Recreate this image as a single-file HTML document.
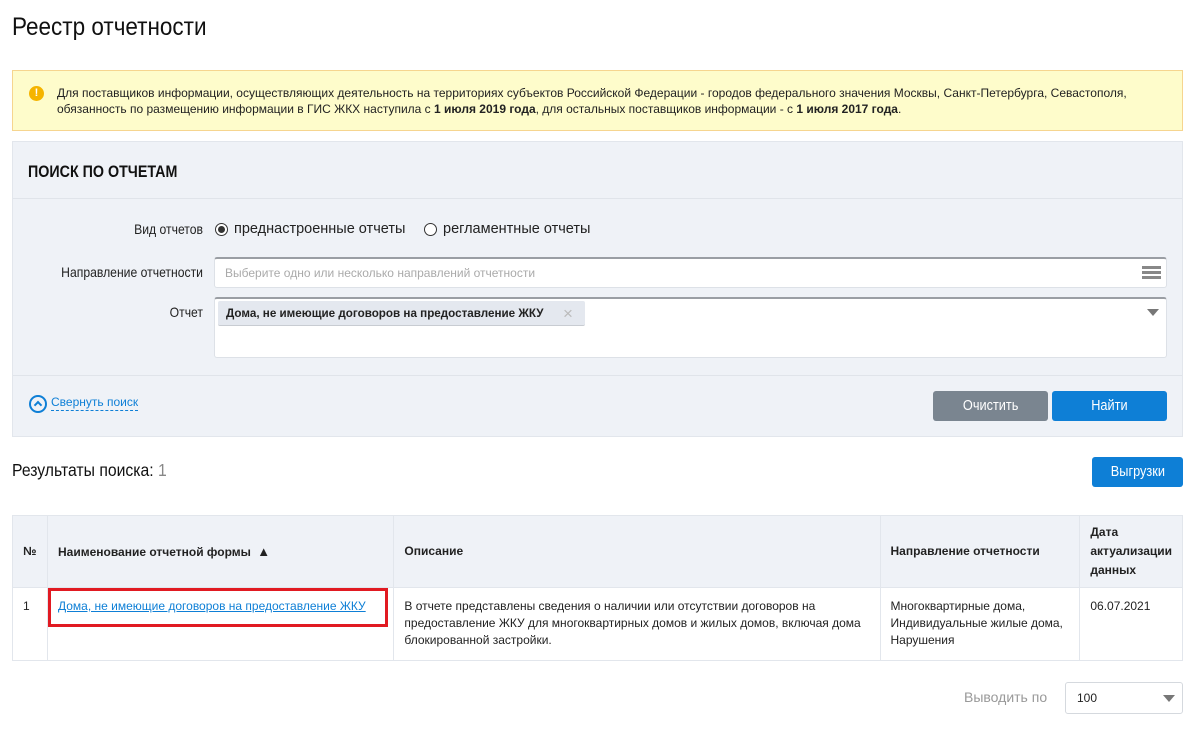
<!DOCTYPE html>
<html><head><meta charset="utf-8"><style>
*{box-sizing:border-box;margin:0;padding:0}
body{width:1190px;height:731px;background:#fff;font-family:"Liberation Sans",sans-serif;color:#222;position:relative;overflow:hidden}
.n{transform-origin:left center;transform:scaleX(.86)}
.abs{position:absolute}
h1{position:absolute;left:12px;top:13px;font-size:25px;font-weight:normal;color:#111;transform-origin:left center;transform:scaleX(.9)}
.warn{left:12px;top:70px;width:1171px;height:61px;background:#fefccb;border:1px solid #f6d58f}
.warn p{position:absolute;left:44px;top:14px;font-size:12px;line-height:16px;color:#222}
.ic{left:16px;top:15px;width:15px;height:15px;border-radius:50%;background:#f5b400;color:#fff;font-size:11px;font-weight:bold;text-align:center;line-height:15px}
.panel{left:12px;top:141px;width:1171px;height:296px;background:#eff2f7;border:1px solid #e2e6ec}
.lbl{font-size:14px;text-align:right;width:190px;left:0;transform-origin:right center;transform:scaleX(.87)}
.inp{background:#fff;border:1px solid #dde1e7;border-top:2px solid #9a9ea4;border-radius:3px}
.btn{color:#fff;font-size:15px;text-align:center;line-height:30px;border-radius:3px}
.btn span{display:inline-block;transform:scaleX(.85)}
table{position:absolute;left:12px;top:515px;width:1171px;border-collapse:collapse;font-size:12px}
td,th{border:1px solid #e2e6ec;vertical-align:top;text-align:left;padding:0 10px}
th{background:#eff2f7;font-weight:bold;vertical-align:middle;height:72px;line-height:19px}
td{line-height:17px;padding-top:10px;height:73px}
</style></head><body>
<h1>Реестр отчетности</h1>
<div class="abs warn"><div class="abs ic">!</div><p>Для поставщиков информации, осуществляющих деятельность на территориях субъектов Российской Федерации - городов федерального значения Москвы, Санкт-Петербурга, Севастополя,<br>обязанность по размещению информации в ГИС ЖКХ наступила с <b>1 июля 2019 года</b>, для остальных поставщиков информации - с <b>1 июля 2017 года</b>.</p></div>
<div class="abs panel">
 <div class="abs n" style="left:15px;top:20px;font-size:17px;font-weight:bold;color:#111;transform:scaleX(.84)">ПОИСК ПО ОТЧЕТАМ</div>
 <div class="abs" style="left:0;top:56px;width:1169px;border-top:1px solid #e0e4ea"></div>
 <div class="abs lbl" style="top:79px">Вид отчетов</div>
 <div class="abs" style="left:202px;top:81px;width:13px;height:13px;border:1px solid #333;border-radius:50%;background:#fff"><div style="margin:2px;width:7px;height:7px;border-radius:50%;background:#333"></div></div>
 <div class="abs" style="left:221px;top:79px;font-size:14.5px">преднастроенные отчеты</div>
 <div class="abs" style="left:411px;top:81px;width:13px;height:13px;border:1px solid #333;border-radius:50%;background:#fff"></div>
 <div class="abs" style="left:430px;top:79px;font-size:14.5px">регламентные отчеты</div>
 <div class="abs lbl" style="top:122px">Направление отчетности</div>
 <div class="abs inp" style="left:201px;top:115px;width:953px;height:31px"><span class="abs" style="left:10px;top:7px;font-size:12px;color:#aaa">Выберите одно или несколько направлений отчетности</span>
  <div class="abs" style="right:5px;top:7px;width:19px;height:3px;background:#888;box-shadow:0 5px 0 #888,0 10px 0 #888"></div></div>
 <div class="abs lbl" style="top:162px">Отчет</div>
 <div class="abs inp" style="left:201px;top:155px;width:953px;height:61px">
  <div class="abs" style="left:3px;top:2px;width:367px;height:25px;background:#e4e8ef;border-radius:2px;border-bottom:1px solid #c8ccd2"><span class="abs" style="left:8px;top:5px;font-size:12px;font-weight:bold;transform-origin:left;transform:scaleX(.97)">Дома, не имеющие договоров на предоставление ЖКУ</span><span class="abs" style="left:345px;top:3px;font-size:17px;color:#bbb">×</span></div>
  <div class="abs" style="right:7px;top:10px;width:0;height:0;border-left:6px solid transparent;border-right:6px solid transparent;border-top:7px solid #777"></div></div>
 <div class="abs" style="left:0;top:233px;width:1169px;border-top:1px solid #e0e4ea"></div>
 <div class="abs" style="left:16px;top:253px;width:18px;height:18px;border:2px solid #0e7fd6;border-radius:50%"><div style="margin:5px 0 0 4px;width:6px;height:6px;border-left:2px solid #0e7fd6;border-top:2px solid #0e7fd6;transform:rotate(45deg)"></div></div>
 <div class="abs" style="left:38px;top:253px;font-size:12px;color:#0e7fd6;border-bottom:1px dashed #0e7fd6;line-height:15px">Свернуть поиск</div>
 <div class="abs btn" style="left:920px;top:249px;width:115px;height:30px;background:#7a8590"><span>Очистить</span></div>
 <div class="abs btn" style="left:1039px;top:249px;width:115px;height:30px;background:#0e7fd6"><span>Найти</span></div>
</div>
<div class="abs n" style="left:12px;top:460px;font-size:17.5px;color:#111;transform:scaleX(.9)">Результаты поиска: <span style="color:#888">1</span></div>
<div class="abs btn" style="left:1092px;top:457px;width:91px;height:30px;background:#0e7fd6"><span>Выгрузки</span></div>
<table>
<tr><th style="width:35px">№</th><th style="width:347px">Наименование отчетной формы <span style="font-size:13px;margin-left:3px">&#9650;</span></th><th style="width:487px">Описание</th><th style="width:200px">Направление отчетности</th><th>Дата<br>актуализации<br>данных</th></tr>
<tr><td>1</td><td style="position:relative"><a style="color:#0e7fd6;text-decoration:underline">Дома, не имеющие договоров на предоставление ЖКУ</a><div class="abs" style="left:0;top:0;width:340px;height:39px;border:3px solid #e11a22"></div></td><td>В отчете представлены сведения о наличии или отсутствии договоров на предоставление ЖКУ для многоквартирных домов и жилых домов, включая дома блокированной застройки.</td><td>Многоквартирные дома,<br>Индивидуальные жилые дома,<br>Нарушения</td><td>06.07.2021</td></tr>
</table>
<div class="abs" style="left:964px;top:689px;font-size:14px;color:#999">Выводить по</div>
<div class="abs" style="left:1065px;top:682px;width:118px;height:32px;border:1px solid #d5d9de;border-radius:3px"><span class="abs" style="left:11px;top:8px;font-size:12px">100</span><div class="abs" style="right:7px;top:12px;border-left:6px solid transparent;border-right:6px solid transparent;border-top:7px solid #777"></div></div>
</body></html>
